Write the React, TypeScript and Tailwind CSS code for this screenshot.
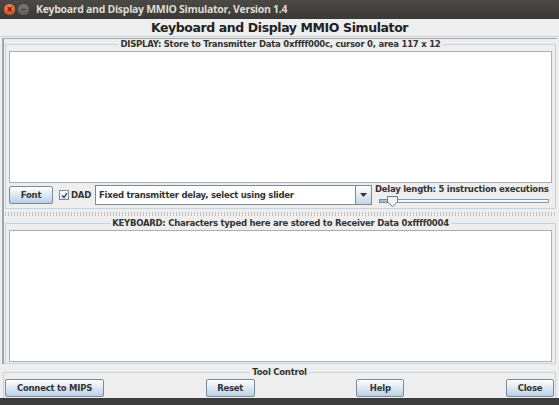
import React from "react";

const txt = "text-[8.5px] tracking-[-0.25px] font-bold text-[#333]";
const btn = `h-[18px] border border-[#7a8a99] rounded-[2px] bg-gradient-to-b from-[#ffffff] via-[#dde8f3] to-[#b8cfe5] leading-none ${txt}`;

function TitleBar() {
  return (
    <div className="h-[19px] shrink-0 flex items-center bg-gradient-to-b from-[#4a4944] to-[#3a3935] pl-[4px]">
      <span className="w-[11px] h-[11px] rounded-full bg-gradient-to-b from-[#f4845a] to-[#df4a16] flex items-center justify-center text-[8px] leading-none text-[#4a1a08] font-bold">
        ×
      </span>
      <span className="ml-[3px] w-[11px] h-[11px] rounded-full bg-gradient-to-b from-[#7c7b76] to-[#5e5d59] flex items-center justify-center">
        <span className="w-[5px] h-[1px] bg-[#3a3935]" />
      </span>
      <span className="ml-[7px] text-[10.5px] font-bold text-[#dfdbd2] font-['Open_Sans',sans-serif] tracking-[-0.3px]">
        Keyboard and Display MMIO Simulator, Version 1.4
      </span>
    </div>
  );
}

function TextArea({ h }: { h: string }) {
  return <div className={`${h} mx-[2px] bg-white border border-[#a6b0ba]`} />;
}

function Splitter() {
  return (
    <div className="h-[9px] flex flex-col justify-center">
      <div className="h-[4px] bg-[radial-gradient(circle,#c4c4c4_0.8px,transparent_1px)] bg-[length:3px_2px]" />
    </div>
  );
}

export default function App() {
  return (
    <div className="w-[559px] h-[405px] overflow-hidden bg-[#eeeeee] flex flex-col font-['DejaVu_Sans',sans-serif] text-[#333]">
      <TitleBar />
      <h1 className="h-[17px] text-center text-[12.5px] tracking-[-0.4px] font-bold leading-[17px] text-[#222]">
        Keyboard and Display MMIO Simulator
      </h1>
      <div className="h-[1px] bg-[#cfcfcf]" />

      {/* split pane */}
      <div className="mt-[1px] mx-[2px] border-l-2 border-t border-[#9aa6b2] flex flex-col">
        <fieldset className="mx-[1px] border border-[#c4d3e2] px-[1px] pb-[1px]">
          <legend className={`mx-auto px-[2px] leading-[11px] ${txt}`}>
            DISPLAY: Store to Transmitter Data 0xffff000c, cursor 0, area 117 x 12
          </legend>
          <div className="h-[1px]" />
          <TextArea h="h-[132px]" />
          <div className="h-[24px] flex items-center pl-[2px] pr-[2px]">
            <button className={`${btn} w-[44px] h-[17px]`}>Font</button>
            <label className={`ml-[6px] flex items-center ${txt}`}>
              <span className="w-[10px] h-[10px] border border-[#7a8a99] bg-gradient-to-b from-white to-[#dde8f3] flex items-center justify-center">
                <svg width="7" height="7" viewBox="0 0 7 7">
                  <path d="M1 3.5 L3 5.5 L6 1" stroke="#333" strokeWidth="1.3" fill="none" />
                </svg>
              </span>
              <span className="ml-[2px]">DAD</span>
            </label>
            <div className="ml-[4px] w-[277px] h-[20px] flex border border-[#7a8a99] bg-white">
              <div className={`flex-1 flex items-center pl-[3px] ${txt}`}>
                Fixed transmitter delay, select using slider
              </div>
              <div className="w-[16px] border-l border-[#7a8a99] bg-gradient-to-b from-white to-[#c6d6e6] flex items-center justify-center">
                <svg width="7" height="4" viewBox="0 0 7 4">
                  <path d="M0 0 H7 L3.5 4 Z" fill="#333" />
                </svg>
              </div>
            </div>
            <div className="ml-[3px] flex-1 flex flex-col">
              <span className={`whitespace-nowrap leading-[11px] ${txt}`}>
                Delay length: 5 instruction executions
              </span>
              <div className="relative h-[12px] ml-[4px] mr-[3px]">
                <div className="absolute left-0 right-0 top-[4px] h-[4px] border border-[#8a9aaa] bg-gradient-to-b from-white to-[#e6edf4]" />
                <div className="absolute left-0 w-[14px] top-[4px] h-[4px] bg-[#a9c0d8] border border-[#7a8a99]" />
                <svg className="absolute left-[8px] top-[1px]" width="11" height="11" viewBox="0 0 11 11">
                  <path d="M0.5 0.5 H10.5 V6 L5.5 10.5 L0.5 6 Z" fill="#eef3f8" stroke="#6d7f91" />
                </svg>
              </div>
            </div>
          </div>
        </fieldset>

        <Splitter />

        <fieldset className="mx-[1px] border border-[#c4d3e2] px-[1px] pb-[1px]">
          <legend className={`mx-auto px-[2px] leading-[11px] ${txt}`}>
            KEYBOARD: Characters typed here are stored to Receiver Data 0xffff0004
          </legend>
          <div className="h-[1px]" />
          <TextArea h="h-[132px]" />
        </fieldset>
      </div>

      <fieldset className="mt-[3px] mx-[3px] border-t border-x border-[#c4d3e2] px-[1px] pb-[1px]">
        <legend className={`mx-auto px-[2px] leading-[11px] ${txt}`}>Tool Control</legend>
        <div className="mt-[1px] flex justify-between">
          <button className={`${btn} w-[99px]`}>Connect to MIPS</button>
          <button className={`${btn} w-[49px]`}>Reset</button>
          <button className={`${btn} w-[48px]`}>Help</button>
          <button className={`${btn} w-[48px]`}>Close</button>
        </div>
      </fieldset>

      <div className="mt-auto h-[7px] bg-[#3c3c3c]" />
    </div>
  );
}
